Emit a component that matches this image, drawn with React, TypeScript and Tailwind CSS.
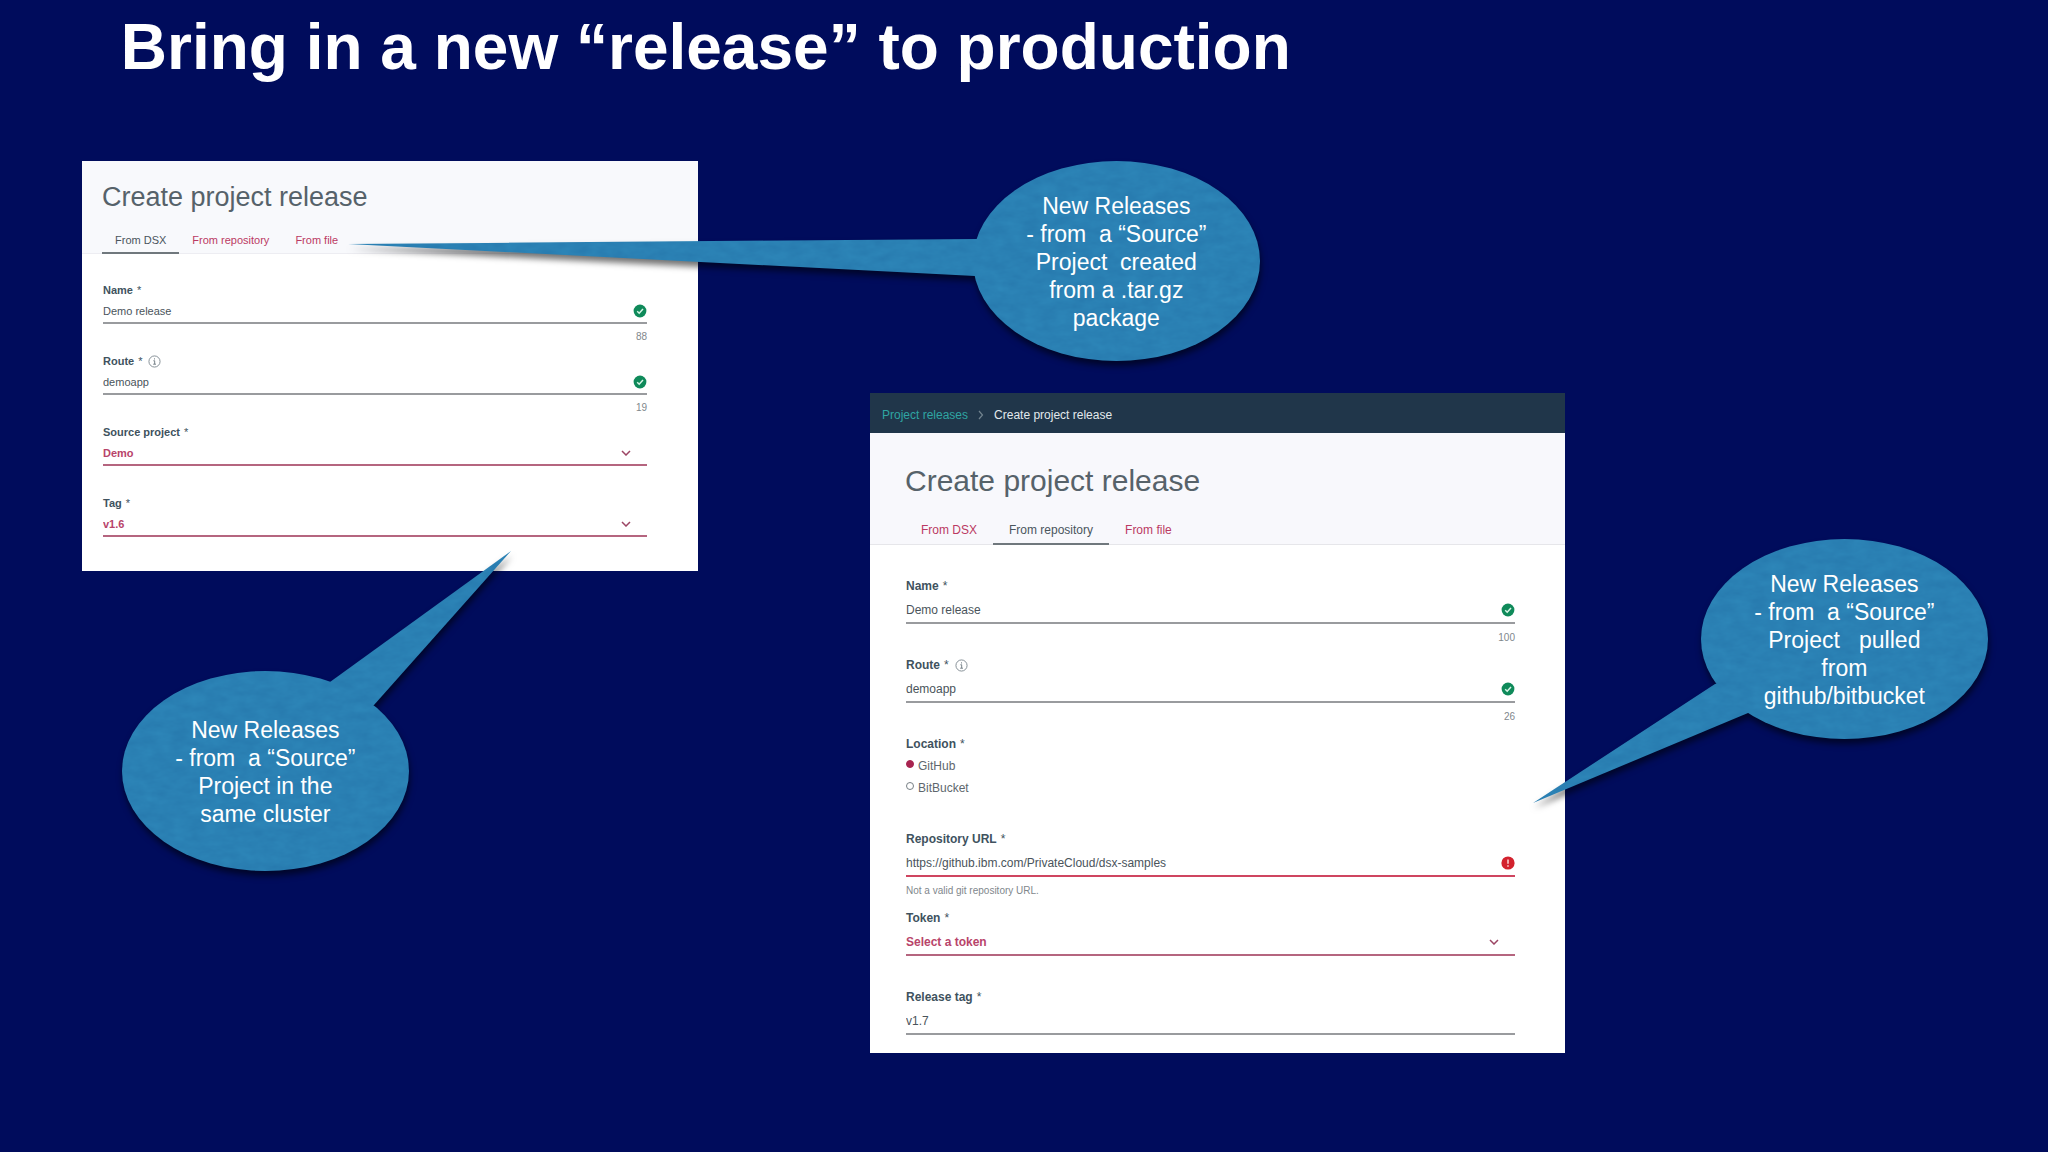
import { useId, type ReactNode } from "react";
import { clsx } from "clsx";

type Size = "sm" | "md";

function CheckIcon() {
  return (
    <svg viewBox="0 0 14 14" className="size-[14px] shrink-0" aria-hidden="true">
      <circle cx="7" cy="7" r="6.4" fill="#0f8a5a" />
      <path d="M4.2 7.3 6.2 9.2 10 5" fill="none" stroke="#d6f5e6" strokeWidth="1.5" />
    </svg>
  );
}

function ErrorIcon() {
  return (
    <svg viewBox="0 0 14 14" className="size-[14px] shrink-0" aria-hidden="true">
      <circle cx="7" cy="7" r="6.6" fill="#d3222e" />
      <path d="M7 3.4v4.4M7 9.2v1.5" stroke="#ffe3e5" strokeWidth="1.4" />
    </svg>
  );
}

function InfoIcon() {
  return (
    <svg viewBox="0 0 14 14" className="ml-[2px] size-[13px]" aria-hidden="true">
      <circle cx="7" cy="7" r="6" fill="none" stroke="#7d8890" strokeWidth="1" />
      <path d="M5.8 6.2h1.4v3.6M5.6 9.9h3M7 3.6v1.2" fill="none" stroke="#6c7880" strokeWidth="1" />
    </svg>
  );
}

function Chevron() {
  return (
    <svg viewBox="0 0 10 6" className="pointer-events-none mr-4 h-[6px] w-[10px] shrink-0" aria-hidden="true">
      <path d="M1 1l4 4 4-4" fill="none" stroke="#9c4564" strokeWidth="1.5" />
    </svg>
  );
}

type FieldProps = {
  size: Size;
  label: string;
  value: string;
  kind?: "text" | "select";
  info?: boolean;
  status?: "ok" | "error";
  count?: string;
  error?: string;
};

function Field({ size, label, value, kind = "text", info, status, count, error }: FieldProps) {
  const id = useId();
  const small = size === "sm";
  return (
    <div className={small ? "h-[71px]" : "h-[79px] last:h-auto"}>
      <label
        htmlFor={id}
        className={clsx(
          "flex items-center gap-1 font-bold text-[#40525e]",
          small ? "h-4 text-[11px]" : "h-[18px] text-xs",
        )}
      >
        {label} <span className="font-normal">*</span>
        {info && <InfoIcon />}
      </label>
      <div
        className={clsx(
          "flex items-center border-b-2 pt-[2px]",
          small ? "h-[26px] text-[11px]" : "h-[29px] text-xs",
          kind === "select" ? "border-[#b5657f]" : status === "error" ? "border-[#cf4560]" : "border-[#999b9e]",
        )}
      >
        {kind === "select" ? (
          <>
            <select
              id={id}
              defaultValue={value}
              className="min-w-0 flex-1 appearance-none bg-transparent font-bold text-[#b8446a] outline-none"
            >
              <option>{value}</option>
            </select>
            <Chevron />
          </>
        ) : (
          <>
            <input id={id} defaultValue={value} className="min-w-0 flex-1 bg-transparent text-[#4a545b] outline-none" />
            {status === "ok" && <CheckIcon />}
            {status === "error" && <ErrorIcon />}
          </>
        )}
      </div>
      {(count || error) && (
        <div
          className={clsx(
            "flex items-center text-[10px] text-[#7f878c]",
            small ? "h-6" : "h-[26px]",
            count ? "justify-end" : "justify-start",
          )}
        >
          {count ?? error}
        </div>
      )}
    </div>
  );
}

function Tabs({ size, active }: { size: Size; active: string }) {
  return (
    <div role="tablist" className="flex">
      {["From DSX", "From repository", "From file"].map((name) => (
        <button
          key={name}
          type="button"
          role="tab"
          aria-selected={name === active}
          className={clsx(
            "border-b-2 pt-[2px] whitespace-nowrap",
            size === "sm" ? "h-7 px-[13px] text-[11px]" : "h-[30px] px-4 text-xs first:pl-[15px]",
            name === active ? "border-[#70787d] text-[#4a555c]" : "border-transparent text-[#bb3a63]",
          )}
        >
          {name}
        </button>
      ))}
    </div>
  );
}

function RadioOption({ label, checked }: { label: string; checked?: boolean }) {
  return (
    <label className="flex h-[22px] items-center gap-1 text-xs text-[#5e676d]">
      <input
        type="radio"
        name="location"
        defaultChecked={checked}
        className="mb-1 size-2 appearance-none rounded-full border border-[#777f85] bg-white checked:border-[#a82450] checked:bg-[#a82450]"
      />
      {label}
    </label>
  );
}

function Callout({ className, tail, children }: { className: string; tail: string; children: ReactNode }) {
  const id = useId();
  return (
    <aside className={clsx("absolute grid h-[200px] w-[287px] place-items-center", className)}>
      <svg viewBox="0 0 287 200" className="absolute inset-0 size-full overflow-visible" aria-hidden="true">
        <defs>
          <filter id={id} filterUnits="userSpaceOnUse" x="-660" y="-160" width="1100" height="480" colorInterpolationFilters="sRGB">
            <feTurbulence type="fractalNoise" baseFrequency="0.06 0.12" numOctaves="3" seed="4" result="noise" />
            <feColorMatrix
              in="noise"
              type="matrix"
              values="0.03 0 0 0 0.15  0.06 0 0 0 0.472  0.05 0 0 0 0.678  0 0 0 0 1"
              result="paper"
            />
            <feComposite in="paper" in2="SourceAlpha" operator="in" result="shape" />
            <feDropShadow in="shape" dx="1" dy="5" stdDeviation="3" floodColor="#000000" floodOpacity="0.55" />
          </filter>
        </defs>
        <g filter={`url(#${id})`} fill="#2b80b4">
          <ellipse cx="143.5" cy="100" rx="143.5" ry="100" />
          <polygon points={tail} />
        </g>
      </svg>
      <p className="relative pt-[2px] text-center text-[23px] leading-7 whitespace-pre text-white">{children}</p>
    </aside>
  );
}

export default function App() {
  return (
    <div className="min-h-screen bg-[#000c5c] font-['Liberation_Sans',Arial,sans-serif]">
      <main className="relative">
        <h1 className="pt-[15px] pl-[5.9%] text-[64px] leading-none font-bold text-white">
          Bring in a new “release” to production
        </h1>

        <div className="grid grid-cols-[82fr_616fr_172fr_695fr_483fr] items-start pt-[82px]">
          <section className="col-start-2 bg-white">
            <header className="border-b border-[#ededf2] bg-[#f8f9fc] pt-5 pl-5">
              <h2 className="text-[27px] leading-8 text-[#56626a]">Create project release</h2>
              <div className="-mb-px pt-[13px]">
                <Tabs size="sm" active="From DSX" />
              </div>
            </header>
            <form className="pt-7 pr-[51px] pb-[5px] pl-[21px]">
              <Field size="sm" label="Name" value="Demo release" status="ok" count="88" />
              <Field size="sm" label="Route" value="demoapp" info status="ok" count="19" />
              <Field size="sm" label="Source project" value="Demo" kind="select" />
              <Field size="sm" label="Tag" value="v1.6" kind="select" />
            </form>
          </section>

          <section className="col-start-4 mt-[232px] bg-white">
            <nav className="flex h-10 items-center bg-[#20364a] pt-1 pl-3 text-xs">
              <a href="#releases" className="text-[#2fa5a3]">
                Project releases
              </a>
              <svg viewBox="0 0 6 10" className="mx-[10px] h-[10px] w-[6px]" aria-hidden="true">
                <path d="M1 1l3.5 4L1 9" fill="none" stroke="#71838f" strokeWidth="1.2" />
              </svg>
              <span className="text-[#e2e9ed]">Create project release</span>
            </nav>
            <header className="border-b border-[#e6e6ea] bg-[#f8f8fc] pt-[30px]">
              <h2 className="pl-[35px] text-[30px] leading-9 text-[#56626a]">Create project release</h2>
              <div className="-mb-px pt-4 pl-9">
                <Tabs size="md" active="From repository" />
              </div>
            </header>
            <form className="pt-8 pr-[50px] pb-[18px] pl-9">
              <Field size="md" label="Name" value="Demo release" status="ok" count="100" />
              <Field size="md" label="Route" value="demoapp" info status="ok" count="26" />
              <fieldset className="h-[95px]">
                <legend className="mb-[2px] flex h-[18px] items-center gap-1 text-xs font-bold text-[#40525e]">
                  Location <span className="font-normal">*</span>
                </legend>
                <RadioOption label="GitHub" checked />
                <RadioOption label="BitBucket" />
              </fieldset>
              <Field
                size="md"
                label="Repository URL"
                value="https://github.ibm.com/PrivateCloud/dsx-samples"
                status="error"
                error="Not a valid git repository URL."
              />
              <Field size="md" label="Token" value="Select a token" kind="select" />
              <Field size="md" label="Release tag" value="v1.7" />
            </form>
          </section>
        </div>

        <Callout className="top-[161px] left-[47.5%]" tail="-625,83 4,78 60,96 2,115">
          {"New Releases\n- from  a “Source”\nProject  created\nfrom a .tar.gz\npackage"}
        </Callout>
        <Callout className="top-[671px] left-[5.95%]" tail="389,-120 208,11 190,60 252,34">
          {"New Releases\n- from  a “Source”\nProject in the\nsame cluster"}
        </Callout>
        <Callout className="top-[539px] left-[83.05%]" tail="-168,264 14,145 70,130 47,174">
          {"New Releases\n- from  a “Source”\nProject   pulled\nfrom\ngithub/bitbucket"}
        </Callout>
      </main>
    </div>
  );
}
